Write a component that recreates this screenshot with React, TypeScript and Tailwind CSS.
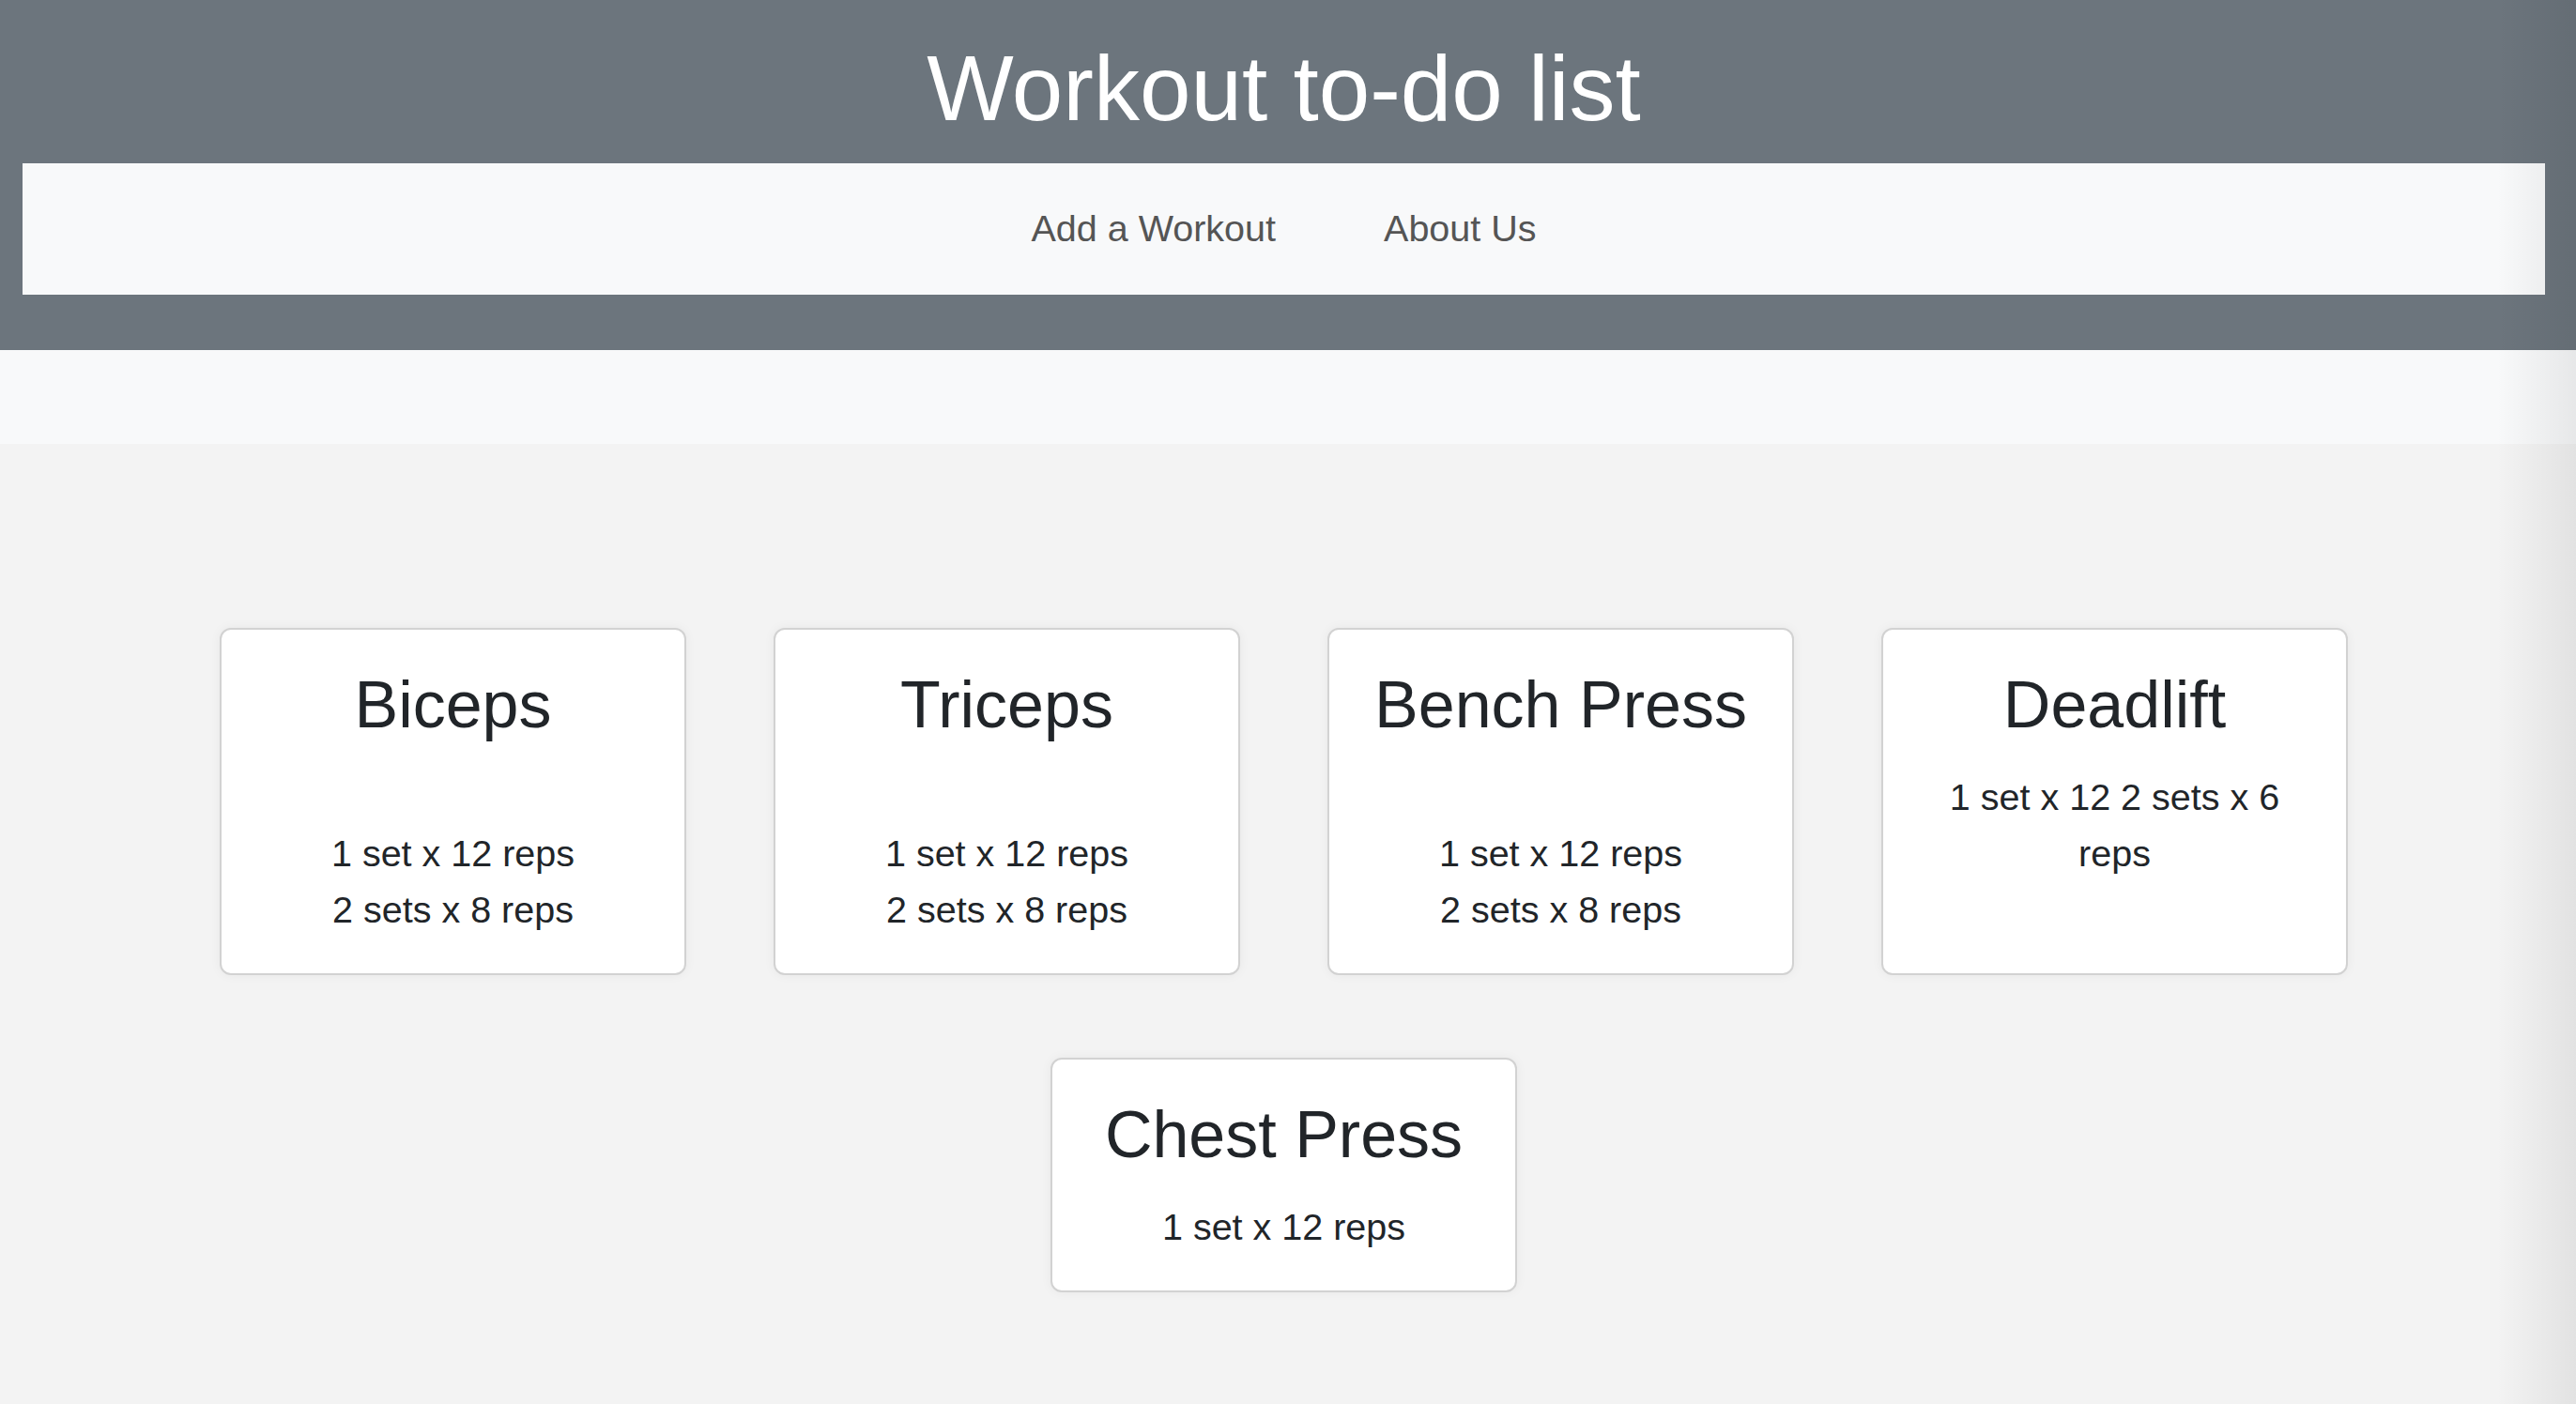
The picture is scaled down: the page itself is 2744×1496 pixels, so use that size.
import React from 'react';

interface Workout {
  name: string;
  lines: string[];
  leadingBlank?: boolean;
}

const workouts: Workout[] = [
  { name: 'Biceps', lines: ['1 set x 12 reps', '2 sets x 8 reps'], leadingBlank: true },
  { name: 'Triceps', lines: ['1 set x 12 reps', '2 sets x 8 reps'], leadingBlank: true },
  { name: 'Bench Press', lines: ['1 set x 12 reps', '2 sets x 8 reps'], leadingBlank: true },
  { name: 'Deadlift', lines: ['1 set x 12 2 sets x 6 reps'] },
  { name: 'Chest Press', lines: ['1 set x 12 reps'] },
];

function WorkoutCard({ workout }: { workout: Workout }) {
  return (
    <div className="w-[497px] bg-white border-2 border-[#d2d2d2] rounded-[12px] shadow-[0_0_12px_rgba(0,0,0,0.05)] px-[38px] pt-[38px] pb-[38px] text-center text-[#212529]">
      <h2 className="text-[70px] leading-[84px] font-normal">{workout.name}</h2>
      <div className="mt-[26px] text-[39.5px] leading-[60px]">
        {workout.leadingBlank && <div>&nbsp;</div>}
        {workout.lines.map(line => (
          <div key={line}>{line}</div>
        ))}
      </div>
    </div>
  );
}

export default function App() {
  return (
    <div
      className="relative min-h-screen bg-[#f3f3f3] overflow-hidden"
      style={{ fontFamily: '"Liberation Sans", Arial, sans-serif' }}
    >
      <header className="bg-[#6c757d] pr-[9px] h-[373px] flex flex-col">
        <h1 className="text-white text-[98px] font-light leading-[118px] text-center pt-[35px] h-[174px]">
          Workout to-do list
        </h1>
        <nav className="ml-[24px] mr-[24px] h-[140px] bg-[#f8f9fa] flex items-center justify-center gap-[115px]">
          <a className="text-[39.5px] text-[#555555]">Add a Workout</a>
          <a className="text-[39.5px] text-[#555555]">About Us</a>
        </nav>
      </header>
      <div className="h-[100px] bg-[#f8f9fa]" />
      <main className="pr-[9px] pt-[196px] pb-[120px] flex flex-wrap justify-center gap-x-[93px] gap-y-[88px]">
        {workouts.map(w => (
          <WorkoutCard key={w.name} workout={w} />
        ))}
      </main>
      <div className="pointer-events-none absolute right-0 top-0 h-full w-[84px] bg-gradient-to-r from-transparent to-black/[0.07]" />
    </div>
  );
}
